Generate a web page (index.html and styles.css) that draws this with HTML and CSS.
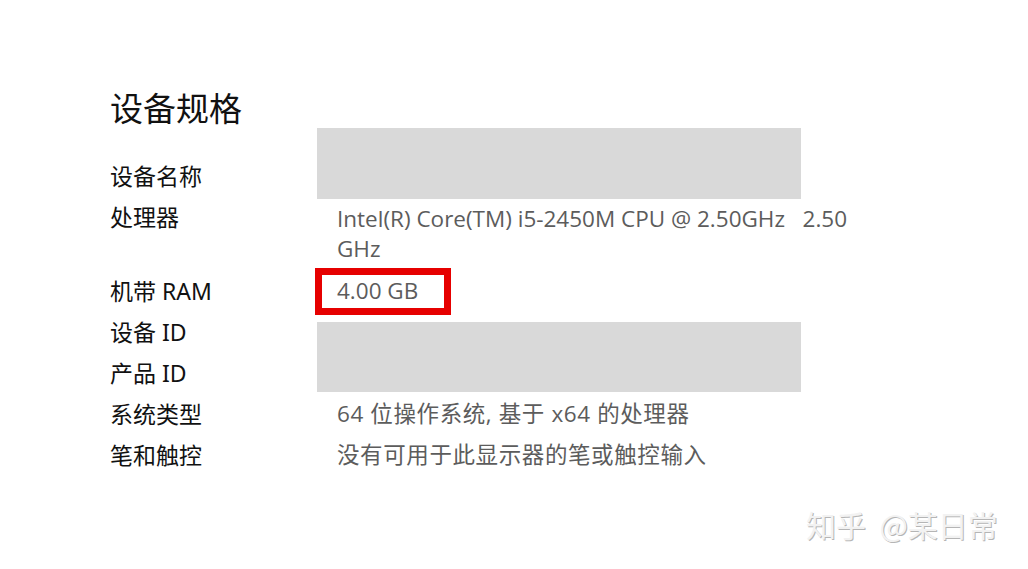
FILE: index.html
```html
<!DOCTYPE html>
<html lang="zh-CN">
<head>
<meta charset="utf-8">
<title>设备规格</title>
<link rel="stylesheet" href="styles.css">
</head>
<body>
<main class="page">
  <h1 class="title">设备规格</h1>
  <dl class="specs">
    <div class="row"><dt>设备名称</dt><dd>&nbsp;</dd></div>
    <div class="row row-tall"><dt>处理器</dt><dd>Intel(R) Core(TM) i5-2450M CPU @ 2.50GHz&nbsp;&nbsp; 2.50 GHz</dd></div>
    <div class="row"><dt>机带 RAM</dt><dd>4.00 GB</dd></div>
    <div class="row"><dt>设备 ID</dt><dd>&nbsp;</dd></div>
    <div class="row"><dt>产品 ID</dt><dd>&nbsp;</dd></div>
    <div class="row"><dt>系统类型</dt><dd class="cjk">64 位操作系统, 基于 x64 的处理器</dd></div>
    <div class="row"><dt>笔和触控</dt><dd class="cjk">没有可用于此显示器的笔或触控输入</dd></div>
  </dl>
  <div class="redact redact-name"></div>
  <div class="redact redact-ids"></div>
  <div class="highlight"></div>
  <div class="watermark">知乎&nbsp;&nbsp;@某日常</div>
</main>
</body>
</html>
```
FILE: styles.css
```css
html, body {
  margin: 0;
  padding: 0;
  background: #fff;
}
.page {
  position: relative;
  width: 1028px;
  height: 569px;
  overflow: hidden;
  padding: 87px 0 0 110px;
  box-sizing: border-box;
  font-family: "Open Sans", "Noto Sans CJK SC", sans-serif;
  color: #111;
}
.title {
  margin: 0;
  font-family: "Noto Sans CJK SC", sans-serif;
  font-weight: 400;
  font-size: 33px;
  line-height: 40px;
  color: #111;
}
.specs {
  margin: 34px 0 0 0;
  padding: 0;
}
.row {
  display: grid;
  grid-template-columns: 227px 520px;
  padding-bottom: 11px;
  line-height: 30px;
}
.row-tall {
  padding-bottom: 12px;
}
.row-tall dd {
  padding-top: 2px;
}
.row dt {
  margin: 0;
  color: #111;
  font-size: 23px;
  font-family: "Noto Sans", "Noto Sans CJK SC", sans-serif;
}
.row dd {
  margin: 0;
  color: #5c5c5c;
  font-size: 22.5px;
}
.row dd.cjk {
  letter-spacing: 0.6px;
}
.redact {
  position: absolute;
  left: 317px;
  width: 484px;
  background: #d9d9d9;
}
.redact-name {
  top: 128px;
  height: 71px;
}
.redact-ids {
  top: 322px;
  height: 70px;
}
.highlight {
  position: absolute;
  left: 315px;
  top: 268px;
  width: 136px;
  height: 47px;
  border: 7px solid #e60000;
  box-sizing: border-box;
}
.watermark {
  position: absolute;
  left: 806px;
  top: 504px;
  font-family: "Noto Sans CJK SC", sans-serif;
  font-size: 30px;
  line-height: 40px;
  color: #f2f2f2;
  text-shadow: 1px 1px 0 #b5b5b5, -1px -1px 0 #fff;
}
```
